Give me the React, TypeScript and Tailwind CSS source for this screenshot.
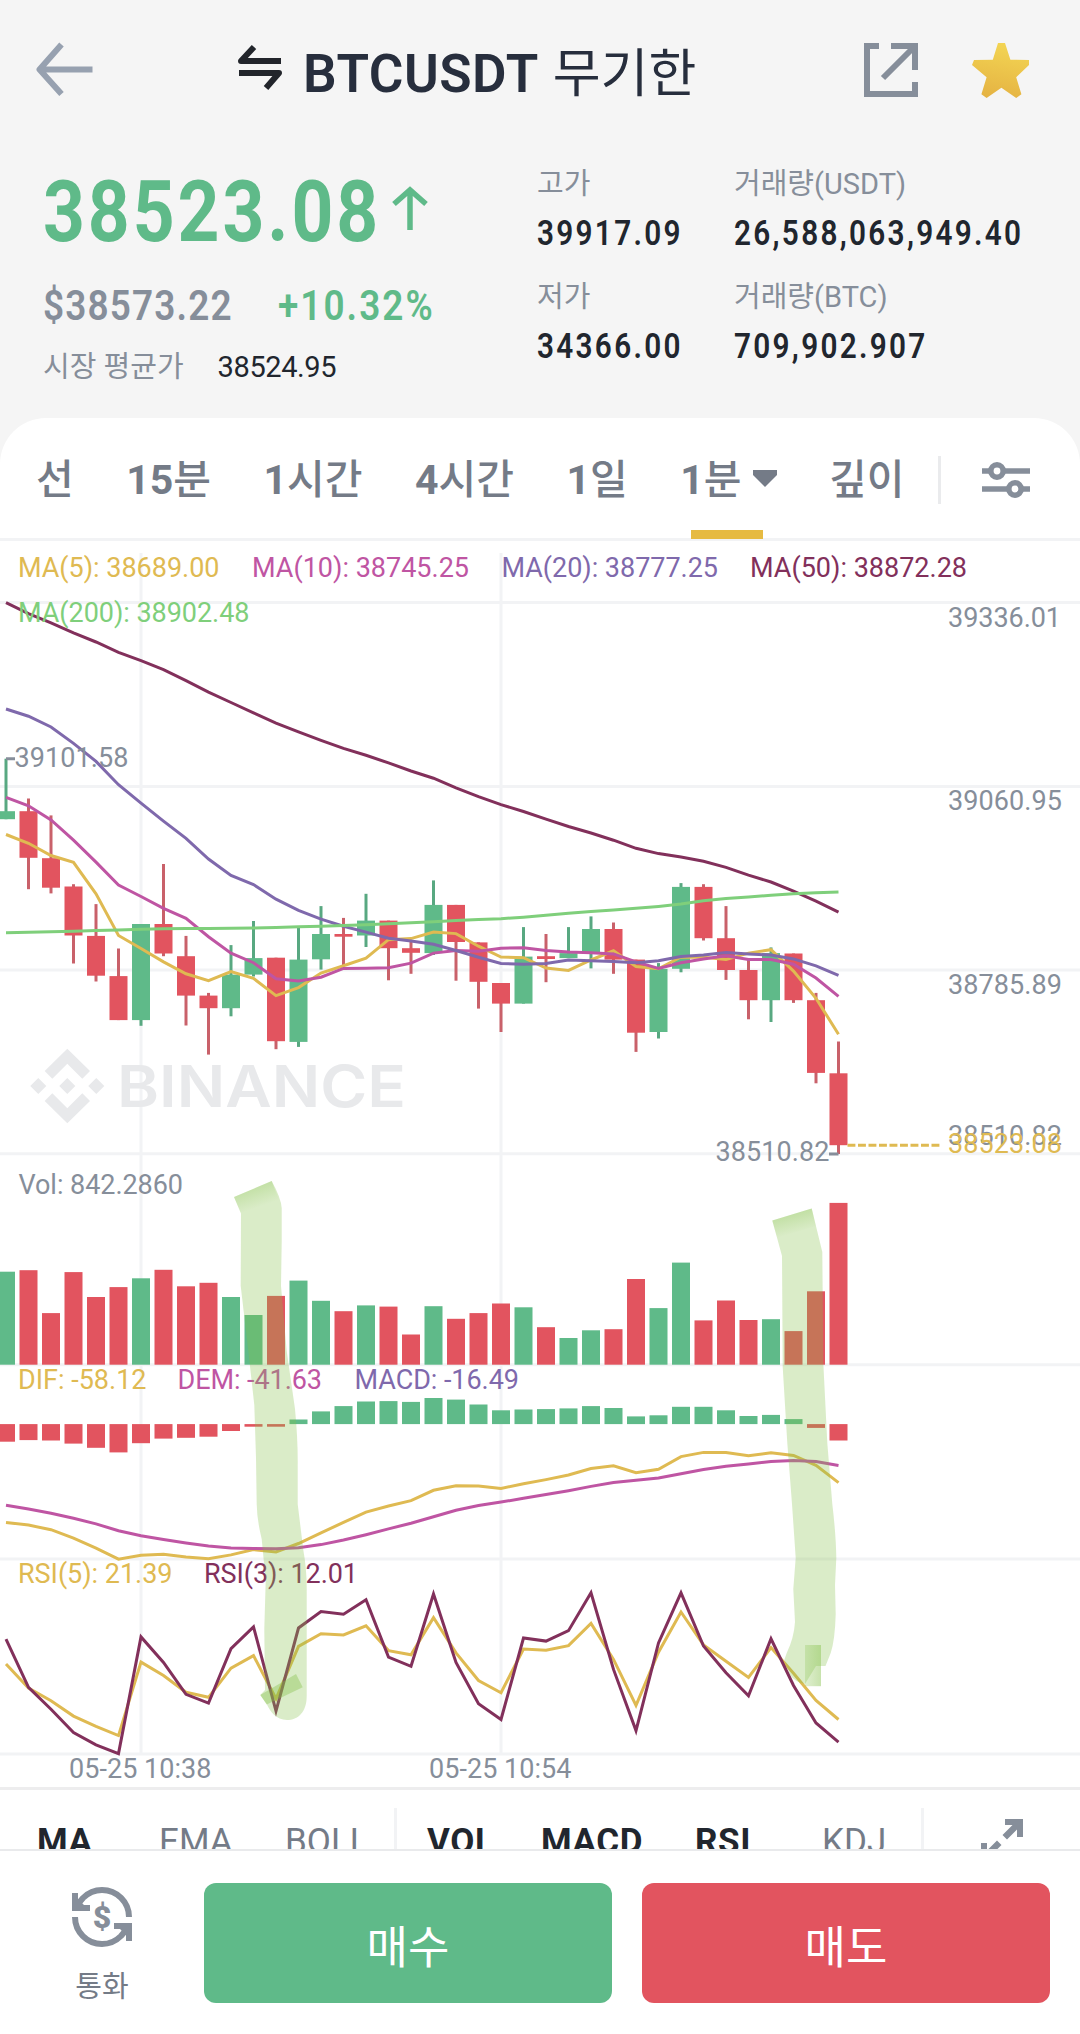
import type { ReactNode } from 'react';

// ============================================================================
// THEME
// ============================================================================

const GREEN = '#5fba89';
const RED = '#e2545f';
const GREEN_WICK = '#58a881';
const RED_WICK = '#c9616a';
const YELLOW = '#dfba52';
const PINK = '#bf55a3';
const PURPLE = '#7f69ac';
const WINE = '#82305b';
const LIME = '#7fcf7b';
const GRAY = '#868e9a';
const GRID = '#f2f3f5';
const MARKER = '#84c048';

// ============================================================================
// CHART DATA
// ============================================================================

// [wick top, body top, body bottom, wick bottom, volume top, macd end, is up]
const CANDLES: [number, number, number, number, number, number, 0 | 1][] = [
    [758.7, 811.2, 819.2, 819.2, 1271.7, 1441.7, 1],
    [798.5, 811.2, 857.8, 889.2, 1270.2, 1440.1, 0],
    [815.4, 858.2, 887.7, 893.4, 1313.1, 1440.5, 0],
    [884.2, 886.5, 935.5, 963.5, 1272.1, 1443.6, 0],
    [904.1, 935.9, 975.7, 981.5, 1297, 1447.8, 0],
    [948.5, 976.1, 1020.1, 1020.1, 1287.1, 1452.4, 0],
    [924, 924, 1020.1, 1025.8, 1278.3, 1443.2, 1],
    [864, 924, 953.5, 956.2, 1269.8, 1438.6, 0],
    [935.9, 956.2, 995.6, 1025.5, 1286.3, 1437.8, 0],
    [992.9, 995.6, 1008.2, 1054.6, 1282.8, 1436.7, 0],
    [945.1, 974.6, 1008.2, 1016.3, 1297, 1431, 1],
    [921, 958.1, 974.6, 976.5, 1315, 1426.7, 1],
    [957.7, 957.7, 1041.2, 1049.2, 1295.9, 1426.7, 0],
    [927.9, 959.6, 1041.9, 1046.9, 1280.6, 1419.5, 1],
    [906.1, 934, 959.3, 969.6, 1300.8, 1411.4, 1],
    [917.9, 934, 936.7, 965.8, 1311.2, 1406.1, 0],
    [893.8, 920.6, 935.5, 947, 1305.4, 1401.5, 1],
    [920.6, 920.6, 948.2, 980.3, 1306.6, 1401.1, 0],
    [941.3, 948.2, 952.8, 973.8, 1334.5, 1401.9, 0],
    [880.4, 904.9, 953.1, 955, 1306.2, 1398, 1],
    [904.9, 904.9, 942, 980.7, 1318.8, 1399.6, 0],
    [942.4, 942.4, 981.8, 1008.6, 1313.1, 1404.5, 0],
    [983, 983, 1003.6, 1032, 1303.5, 1410.3, 0],
    [927.1, 956.6, 1003.6, 1003.6, 1307.3, 1409.5, 1],
    [934, 956.2, 959, 982.2, 1327.2, 1409.1, 0],
    [927.1, 953.1, 958.1, 958.1, 1338, 1408.4, 1],
    [916.4, 929, 952, 968.4, 1330.3, 1406.1, 1],
    [922.5, 929, 959.6, 973.8, 1329.2, 1408, 0],
    [959.6, 959.6, 1032.7, 1051.9, 1279, 1416.4, 0],
    [963.1, 968.8, 1032, 1038.5, 1308.1, 1415.3, 1],
    [883.1, 886.9, 968.8, 972.3, 1262.6, 1406.8, 1],
    [884.2, 886.9, 938.2, 940.5, 1320.4, 1406.8, 0],
    [906.1, 938.2, 970, 979.9, 1300.5, 1410.3, 0],
    [958.9, 970, 1000.2, 1019.3, 1320, 1416, 0],
    [947.4, 953.1, 1000.2, 1022, 1319.2, 1414.9, 1],
    [953.5, 953.5, 1000.2, 1002.9, 1331.1, 1419.1, 0],
    [992.9, 1000.2, 1072.9, 1083.3, 1291.3, 1427.9, 0],
    [1041.5, 1073.3, 1145.2, 1154, 1202.9, 1440.5, 0],
];

const MA5 = [834.5, 843.3, 855.5, 862.4, 893.8, 935.5, 948.5, 961.9, 973.8, 980.7, 971.5, 978.4, 995.6, 987.6, 973, 965.8, 958.1, 939.7, 938.6, 932.1, 933.6, 946.2, 957, 957.7, 968.1, 970.4, 960, 950.8, 966.5, 968.8, 957, 957.3, 959.6, 953.1, 949.7, 971.1, 998.3, 1034.3];
const MA10 = [797.4, 805.8, 820, 840.2, 862.1, 885, 896.5, 908.4, 918.3, 936.7, 953.1, 962.7, 978.8, 981.1, 977.2, 968.4, 968.2, 967.7, 963.1, 953.1, 950.5, 951.2, 948.2, 947.8, 950.5, 952, 952.8, 953.9, 961.9, 968.4, 962.7, 958.9, 955.8, 959.6, 959.6, 964.2, 978, 996.4];
const MA20 = [709, 716.2, 727, 743.4, 761.4, 784.7, 803.1, 821.1, 838.3, 859, 875.4, 884.6, 899.2, 910.3, 919.1, 926.3, 932.1, 938.2, 940.9, 944.3, 950.5, 957.3, 963.5, 964.2, 963.5, 960, 960.8, 961.6, 962.7, 960.8, 956.6, 955, 952.4, 953.9, 955, 958.9, 965.8, 975.3];
const MA50 = [602.6, 613.7, 622.9, 632.8, 642, 652.3, 660.7, 669.6, 680.6, 692.1, 702.5, 712.8, 723.1, 731.9, 740.4, 748.4, 755.3, 762.9, 771, 778.2, 787.8, 796.6, 804.6, 811.5, 819.2, 826.5, 833, 840.2, 848.3, 853.6, 857.1, 861.3, 867.4, 875.1, 882, 891.1, 901.1, 912.2];
const MA200 = [932.8, 932.3, 931.8, 931.3, 930.6, 929.9, 929.2, 928.8, 928.6, 928.4, 928.2, 927.9, 927.4, 926.8, 926.3, 925.6, 924.8, 923.8, 922.7, 921.7, 920.6, 919.5, 918.7, 917.2, 915.3, 913.3, 911.6, 909.9, 908.2, 906.4, 904.1, 900.7, 898.4, 896.9, 895.2, 893.8, 892.7, 891.9];
const DIF = [1522.4, 1525.1, 1529.7, 1538.1, 1548.1, 1559.2, 1555.3, 1554.2, 1556.9, 1558.8, 1554.9, 1549.6, 1551.9, 1543.5, 1532.8, 1522.4, 1512.1, 1506, 1500.6, 1490.3, 1485.7, 1486.1, 1488.4, 1483.8, 1479.6, 1475, 1468.5, 1465.8, 1472.7, 1469.2, 1456.6, 1452.4, 1452.4, 1455.8, 1452.8, 1455.4, 1465.4, 1482.6];
const DEM = [1505.2, 1509, 1513.2, 1518.2, 1523.9, 1530.8, 1535.8, 1539.6, 1543.1, 1546.1, 1548.1, 1548.4, 1548.8, 1547.7, 1544.6, 1540, 1534.7, 1528.9, 1523.2, 1516.7, 1510.2, 1505.6, 1502.1, 1498.3, 1494.5, 1490.7, 1486.4, 1482.6, 1480.3, 1478, 1473.8, 1469.6, 1466.2, 1463.9, 1461.6, 1460.4, 1461.6, 1465.4];
const RSI5 = [1664, 1688.1, 1700.8, 1716.1, 1726.4, 1735.6, 1662.1, 1675.5, 1692.3, 1697.3, 1668.2, 1655.6, 1698.8, 1646.4, 1633.8, 1634.9, 1625.8, 1650.6, 1654.8, 1617.7, 1652.9, 1680.5, 1692.7, 1649.1, 1650.2, 1645.6, 1623.5, 1659.4, 1705.3, 1652.2, 1612, 1644.9, 1661.3, 1677.4, 1647.6, 1673.2, 1700.4, 1719.5];
const RSI3 = [1639.1, 1687.4, 1709.2, 1732.5, 1744.8, 1753.6, 1636.9, 1662.5, 1694.3, 1703.1, 1648.7, 1626.9, 1711.1, 1628, 1611.6, 1614.3, 1599.7, 1657.1, 1666.3, 1594, 1662.5, 1703.8, 1719.5, 1638, 1641.1, 1630.7, 1592.8, 1669.4, 1730.6, 1643, 1592.8, 1646, 1672.8, 1695.8, 1638.8, 1685.5, 1723, 1742.1];

const VOL_BASE = 1364.7;
const MACD_BASE = 1424.1;

const xAt = (i: number) => 6 + i * 22.5;

const LABELS: { x: number; y: number; w: number; fill: string; text: string }[] = [
    { x: 18, y: 576.7, w: 201.5, fill: YELLOW, text: 'MA(5): 38689.00' },
    { x: 252, y: 576.7, w: 217, fill: PINK, text: 'MA(10): 38745.25' },
    { x: 501.5, y: 576.7, w: 216.5, fill: PURPLE, text: 'MA(20): 38777.25' },
    { x: 750, y: 576.7, w: 217, fill: WINE, text: 'MA(50): 38872.28' },
    { x: 18, y: 621.6, w: 231.5, fill: LIME, text: 'MA(200): 38902.48' },
    { x: 948, y: 627, w: 113, fill: GRAY, text: '39336.01' },
    { x: 948, y: 810, w: 114, fill: GRAY, text: '39060.95' },
    { x: 948, y: 993.5, w: 114, fill: GRAY, text: '38785.89' },
    { x: 948, y: 1145.3, w: 114, fill: GRAY, text: '38510.82' },
    { x: 948, y: 1152.7, w: 114, fill: YELLOW, text: '38523.08' },
    { x: 14.5, y: 767, w: 114, fill: GRAY, text: '39101.58' },
    { x: 715.5, y: 1161, w: 114, fill: GRAY, text: '38510.82' },
    { x: 18.5, y: 1194, w: 164.5, fill: GRAY, text: 'Vol: 842.2860' },
    { x: 18, y: 1388.9, w: 128.5, fill: YELLOW, text: 'DIF: -58.12' },
    { x: 177.5, y: 1388.9, w: 144.5, fill: PINK, text: 'DEM: -41.63' },
    { x: 354.5, y: 1388.9, w: 164.5, fill: PURPLE, text: 'MACD: -16.49' },
    { x: 18, y: 1582.9, w: 154.5, fill: YELLOW, text: 'RSI(5): 21.39' },
    { x: 204, y: 1582.9, w: 154, fill: WINE, text: 'RSI(3): 12.01' },
    { x: 69, y: 1777.7, w: 142.5, fill: GRAY, text: '05-25 10:38' },
    { x: 429, y: 1777.7, w: 142.5, fill: GRAY, text: '05-25 10:54' },
];

// ============================================================================
// CHART
// ============================================================================

function Line({ data, color }: { data: number[]; color: string }) {
    return (
        <polyline
            points={data.map((y, i) => `${xAt(i)},${y}`).join(' ')}
            fill="none"
            stroke={color}
            strokeWidth="3"
        />
    );
}

function Watermark() {
    return (
        <g fill="#e8e9eb">
            <path d="M67.3 1048.8 90 1071l-7.7 7.7-15-15-15 15-7.6-7.7Z" />
            <path d="M67.3 1123.2 90 1101l-7.7-7.7-15 15-15-15-7.6 7.7Z" />
            <path d="m67.3 1078 8 8-8 8-8-8ZM38.3 1078l8 8-8 8-8-8ZM96.3 1078l8 8-8 8-8-8Z" />
            <text x="117" y="1107.3" fontSize="58" className="font-['Inter'] font-semibold" textLength="289" lengthAdjust="spacingAndGlyphs">
                BINANCE
            </text>
        </g>
    );
}

function Highlights() {
    return (
        <g fill={MARKER}>
            <defs>
                <linearGradient id="tipA" gradientUnits="userSpaceOnUse" x1="252" y1="1187" x2="259" y2="1207">
                    <stop offset="0" stopColor={MARKER} stopOpacity="0.28" />
                    <stop offset="1" stopColor={MARKER} stopOpacity="0" />
                </linearGradient>
                <linearGradient id="tipB" gradientUnits="userSpaceOnUse" x1="791" y1="1214" x2="796" y2="1233">
                    <stop offset="0" stopColor={MARKER} stopOpacity="0.28" />
                    <stop offset="1" stopColor={MARKER} stopOpacity="0" />
                </linearGradient>
                <linearGradient id="endB" x1="0" y1="0" x2="1" y2="0">
                    <stop offset="0" stopColor={MARKER} stopOpacity="0.25" />
                    <stop offset="1" stopColor={MARKER} stopOpacity="0.45" />
                </linearGradient>
            </defs>
            <path
                d="M234 1197 271.7 1181Q281 1198 281.7 1208V1242L281 1286 286.7 1351 295 1409Q298 1440 297.7 1466V1504L303.3 1550Q307 1570 306.7 1592V1696C306.7 1712 298 1720 287 1720 276 1720 270 1711 266.7 1704L260.3 1695 265 1690 264.3 1629 265.7 1581 261.7 1539Q257 1520 256.7 1504L256 1458 254.3 1405 248.3 1351 240.7 1286 241 1213.6Z"
                fillOpacity="0.3"
            />
            <path d="M234 1197 271.7 1181 279 1200 241 1213.6Z" fill="url(#tipA)" />
            <path d="M260.3 1695 296 1674 302.7 1687.3 266.7 1704.6Z" fillOpacity="0.38" />
            <path
                d="M772.3 1220.5 811.7 1208.6 822.3 1252 823.3 1363 827.3 1443 832.3 1504Q836 1535 836.3 1558L835 1585 835.7 1614Q835 1640 830.7 1653L825.5 1666H816L805 1684Q795 1682 790 1675L784.3 1660 786.7 1653Q794 1638 795 1622L793.3 1589 795.7 1558 792 1504 787.3 1443 782.7 1367 782 1256 776.7 1236.5Z"
                fillOpacity="0.3"
            />
            <path d="M772.3 1220.5 811.7 1208.6 816 1226 777 1238Z" fill="url(#tipB)" />
            <path d="M805 1645H821V1686.2H805Z" fill="url(#endB)" />
        </g>
    );
}

function Chart() {
    return (
        <svg viewBox="0 541 1080 1246" className="block h-[1246px] w-full shrink-0 font-['Roboto']">
            {/* Grid */}
            <g stroke={GRID} strokeWidth="3">
                {[602.5, 786.5, 970, 1153.7, 1364.7, 1559, 1754].map((y) => (
                    <line key={y} x1="0" x2="1080" y1={y} y2={y} />
                ))}
                <line x1="141" x2="141" y1="553" y2="1754" />
                <line x1="501" x2="501" y1="553" y2="1754" />
            </g>

            <Watermark />

            {/* Candles, volume and MACD bars */}
            {CANDLES.map(([high, top, bottom, low, vol, macd, up], i) => {
                const x = xAt(i);
                const body = up ? GREEN : RED;
                return (
                    <g key={i}>
                        <line x1={x} x2={x} y1={high} y2={low} stroke={up ? GREEN_WICK : RED_WICK} strokeWidth="3" />
                        <rect x={x - 9} y={top} width="18" height={bottom - top} fill={body} />
                        <rect x={x - 9} y={vol} width="18" height={VOL_BASE - vol} fill={body} />
                        <rect
                            x={x - 9}
                            y={Math.min(macd, MACD_BASE)}
                            width="18"
                            height={Math.abs(macd - MACD_BASE)}
                            fill={macd < MACD_BASE ? GREEN : RED}
                        />
                    </g>
                );
            })}

            <Line data={MA5} color={YELLOW} />
            <Line data={MA10} color={PINK} />
            <Line data={MA20} color={PURPLE} />
            <Line data={MA50} color={WINE} />
            <Line data={MA200} color={LIME} />
            <Line data={DIF} color={YELLOW} />
            <Line data={DEM} color={PINK} />
            <Line data={RSI5} color={YELLOW} />
            <Line data={RSI3} color={WINE} />

            {/* High, low and last price markers */}
            <path d="M6 758.7H15M829 1154H838.5" stroke={GRAY} strokeWidth="3" />
            <path d="M847.5 1145.3H939.5" stroke={YELLOW} strokeWidth="3" strokeDasharray="7.9 2.6" />

            {LABELS.map((l) => (
                <text key={`${l.x}-${l.y}`} x={l.x} y={l.y} fill={l.fill} fontSize="27" textLength={l.w}>
                    {l.text}
                </text>
            ))}

            <Highlights />
        </svg>
    );
}

// ============================================================================
// ICONS
// ============================================================================

function BackIcon() {
    return (
        <svg width="57" height="54" viewBox="0 0 57 54" fill="none" stroke="#97a1b0" strokeWidth="6" className="-mt-[2px]">
            <path d="M56.5 27.5H5M25.5 2.5 3.5 27.5l22 24.5" strokeLinejoin="round" />
        </svg>
    );
}

function SwapIcon() {
    return (
        <svg width="46" height="48" viewBox="0 0 46 48" fill="none" stroke="#22252b" strokeWidth="6" strokeLinejoin="round" className="-mt-[4px]">
            <path d="M44 17H4L17 3" />
            <path d="M2 29H42L29 44" />
        </svg>
    );
}

function ShareIcon() {
    return (
        <svg width="54" height="54" viewBox="0 0 54 54" fill="none" stroke={GRAY} strokeWidth="6">
            <path d="M15 3H3V51H51V39M27 3H51V27M50 4 19 35" />
        </svg>
    );
}

function StarIcon() {
    return (
        <svg width="57" height="55" viewBox="0 0 57 55">
            <defs>
                <linearGradient id="star" x1="0.6" y1="0" x2="0.4" y2="1">
                    <stop offset="0" stopColor="#f3d553" />
                    <stop offset="1" stopColor="#e5b343" />
                </linearGradient>
            </defs>
            <path
                d="M26 0H33L38.4 16.7 57 17V22L44.2 34.3 49.4 51.3 44.2 55 29.4 44.7 14.6 55 9.4 51.3 14.6 34.3 0 22 2 17 20.8 16.7Z"
                fill="url(#star)"
            />
        </svg>
    );
}

function UpArrow() {
    return (
        <svg width="36" height="44" viewBox="0 0 36 44" fill="none" stroke={GREEN} strokeWidth="5.5" className="-ml-[44px] -mt-[7px]">
            <path d="M18 44V4M2 18 18 4l16 14" />
        </svg>
    );
}

function SlidersIcon() {
    return (
        <svg width="48" height="36" viewBox="0 0 48 36" fill="none" stroke={GRAY} strokeWidth="5.6">
            <path d="M0 9H9M21 9H48M0 27H27M39 27H48" />
            <circle cx="15" cy="9" r="6.2" />
            <circle cx="33" cy="27" r="6.2" />
        </svg>
    );
}

function ConvertIcon() {
    return (
        <svg width="60" height="60" viewBox="0 0 60 60">
            <g fill="none" stroke={GRAY} strokeWidth="6">
                <path d="M57 30A27 27 0 0 0 30 3C22 3 16 6 11 11L5 18" />
                <path d="M3 30A27 27 0 0 0 30 57C38 57 44 54 49 49L55 42" />
            </g>
            <path d="M0 6H6V12L12 18H18V24H0ZM60 54H54V48L48 42H42V36H60Z" fill={GRAY} />
            <text x="30" y="41" textAnchor="middle" fontSize="32" fill={GRAY} className="font-['Roboto'] font-black">
                $
            </text>
        </svg>
    );
}

function ExpandIcon() {
    return (
        <svg width="42" height="42" viewBox="0 0 42 42" fill={GRAY}>
            <path d="M24 0H42V18H36V10.5L26 20.5 21.5 16 31.5 6H24Z" />
            <path d="M18 42H0V24H6V31.5L16 21.5 20.5 26 10.5 36H18Z" />
        </svg>
    );
}

// ============================================================================
// PAGE
// ============================================================================

function Stat({ label, value }: { label: string; value: string }) {
    return (
        <div className="h-[113px]">
            <div className="h-[44px] text-[29px] leading-[40px] text-[#868e9a]">{label}</div>
            <div className="origin-left scale-x-[0.85] text-[35px] font-semibold leading-[52px] tracking-[2.7px] text-[#21262e]">
                {value}
            </div>
        </div>
    );
}

function Header() {
    return (
        <header className="h-[464px] shrink-0 bg-[#f5f5f5]">
            <div className="flex h-[140px] items-center pl-[36px] pr-[51px]">
                <BackIcon />
                <div className="ml-[144px] flex items-center gap-[20px]">
                    <SwapIcon />
                    <h1 className="flex items-baseline gap-[14px] pt-[9px] text-[53px] leading-[60px] text-[#272e3d]">
                        <span className="font-semibold tracking-[0.5px]">BTCUSDT</span>
                        <span className="text-[52px]">무기한</span>
                    </h1>
                </div>
                <div className="ml-auto flex items-center gap-[54px]">
                    <ShareIcon />
                    <StarIcon />
                </div>
            </div>

            <div className="flex pl-[43px]">
                <div className="w-[494px]">
                    <div className="flex h-[138px] items-center pt-[4px]">
                        <span className="origin-left scale-x-[0.86] pt-[4px] text-[85px] font-bold tracking-[3.4px] text-[#5fba89]">
                            38523.08
                        </span>
                        <UpArrow />
                    </div>
                    <div className="flex h-[54px] items-center gap-[19px] text-[42px] font-semibold">
                        <span className="origin-left scale-x-[0.88] tracking-[1.3px] text-[#868e9a]">$38573.22</span>
                        <span className="origin-left scale-x-[0.88] tracking-[2.3px] text-[#5fba89]">+10.32%</span>
                    </div>
                    <div className="mt-[15px] flex items-center gap-[34px] text-[29px] leading-[40px]">
                        <span className="text-[#868e9a]">시장 평균가</span>
                        <span className="tracking-[-0.4px] text-[#21262e]">38524.95</span>
                    </div>
                </div>
                <div className="w-[197px] pt-[24px]">
                    <Stat label="고가" value="39917.09" />
                    <Stat label="저가" value="34366.00" />
                </div>
                <div className="pt-[24px]">
                    <Stat label="거래량(USDT)" value="26,588,063,949.40" />
                    <Stat label="거래량(BTC)" value="709,902.907" />
                </div>
            </div>
        </header>
    );
}

function Intervals() {
    return (
        <nav className="z-10 -mt-[46px] flex h-[123px] shrink-0 items-center gap-[52.5px] rounded-t-[46px] border-b-[3px] border-[#f2f3f5] bg-white pl-[36px] pt-[5px] text-[41px] font-medium text-[#747b87]">
            <span>선</span>
            <span><b>15</b>분</span>
            <span><b>1</b>시간</span>
            <span><b>4</b>시간</span>
            <span><b>1</b>일</span>
            <span className="relative flex items-center">
                <b>1</b>분
                <svg width="24" height="18" viewBox="0 0 24 18" fill="#747b87" className="-mt-[3px] ml-[11px]">
                    <path d="M0 0H24V5L12 17 0 5Z" />
                </svg>
                <span className="absolute left-[11px] top-[80px] h-[9px] w-[72px] bg-[#e6ba41]" />
            </span>
            <span>깊이</span>
            <div className="-ml-[19px] -mt-[2px] flex items-center gap-[41px]">
                <span className="h-[48px] w-[3px] bg-[#eaebed]" />
                <SlidersIcon />
            </div>
        </nav>
    );
}

function Indicator({ width, active, children }: { width: string; active?: boolean; children: ReactNode }) {
    return (
        <span className={`${width} shrink-0 pt-[13px] ${active ? 'font-bold tracking-[0.6px] text-[#21262e]' : 'text-[#747b87]'}`}>
            {children}
        </span>
    );
}

function Indicators() {
    return (
        <div className="flex h-[62px] shrink-0 items-start overflow-hidden border-t-[3px] border-[#ededee] pl-[37px] pt-[18px] text-[35px] leading-[42px]">
            <Indicator width="w-[122px]" active>MA</Indicator>
            <Indicator width="w-[126px]">EMA</Indicator>
            <Indicator width="w-[109px]">BOLL</Indicator>
            <span className="mr-[30px] h-[48px] w-[3px] bg-[#f2f3f5]" />
            <Indicator width="w-[114px]" active>VOL</Indicator>
            <Indicator width="w-[154px]" active>MACD</Indicator>
            <Indicator width="w-[127px]" active>RSI</Indicator>
            <Indicator width="w-[99px]">KDJ</Indicator>
            <span className="mr-[57px] h-[48px] w-[3px] bg-[#f2f3f5]" />
            <div className="pt-[11px]">
                <ExpandIcon />
            </div>
        </div>
    );
}

function TradeBar() {
    return (
        <footer className="flex flex-1 items-start border-t-2 border-[#e9eaec] bg-white pr-[30px] pt-[32px]">
            <div className="flex w-[204px] flex-col items-center pt-[4px]">
                <ConvertIcon />
                <span className="mt-[20px] text-[29px] leading-[40px] text-[#747b87]">통화</span>
            </div>
            <div className="flex flex-1 gap-[30px]">
                <button className="h-[120px] flex-1 rounded-[12px] bg-[#5fba89] pt-[11px] text-[45px] text-white">매수</button>
                <button className="h-[120px] flex-1 rounded-[12px] bg-[#e2545f] pt-[11px] text-[45px] text-white">매도</button>
            </div>
        </footer>
    );
}

export default function App() {
    return (
        <div className="flex h-[2034px] w-[1080px] flex-col overflow-hidden bg-white font-['Roboto','Noto_Sans_CJK_KR',sans-serif]">
            <Header />
            <Intervals />
            <Chart />
            <Indicators />
            <TradeBar />
        </div>
    );
}
